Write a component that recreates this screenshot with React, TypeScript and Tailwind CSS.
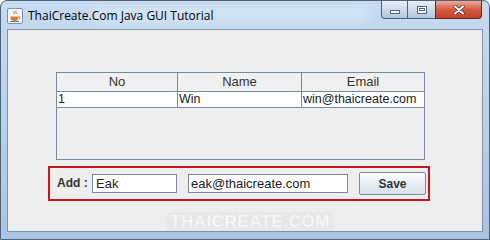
import React from "react";

const JavaIcon = () => (
  <svg width="16" height="16" viewBox="0 0 16 16">
    <rect x="0.5" y="0.5" width="15" height="15" rx="1.5" fill="#f4f7fb" stroke="#7d93ad" />
    <path d="M7 3c-1 1 1 1.5 0 3M9 2.5c-1.2 1.2 1.2 1.8 0 3.5" stroke="#e0642a" strokeWidth="1" fill="none" />
    <path d="M3.5 8.5h8v1.5c0 2-1.8 3-4 3s-4-1-4-3z" fill="#e07b2a" />
    <path d="M11.5 9h1.2c.8 0 .8 1.6-.2 1.8" stroke="#5a7fa8" strokeWidth="0.8" fill="none" />
    <path d="M3 13.5h9" stroke="#5a7fa8" strokeWidth="1" />
  </svg>
);

const rows = [{ no: "1", name: "Win", email: "win@thaicreate.com" }];

export default function App() {
  return (
    <div
      className="w-[490px] h-[240px] flex flex-col overflow-hidden rounded-t-[7px] border border-[#4f6177] bg-gradient-to-b from-[#c6dbf1] via-[#b9d1ea] to-[#a9c4e2] text-[12px] text-[#222]"
      style={{ fontFamily: '"Liberation Sans", Arial, sans-serif' }}
    >
      {/* title bar */}
      <div className="h-[28px] flex items-start shrink-0 relative">
        <div className="absolute left-[90px] right-[120px] top-[5px] h-[16px] rounded-full bg-[#d9e8f7] opacity-70 blur-[4px]" />
        <div className="flex items-center gap-[5px] pl-[6px] pt-[6px] relative">
          <JavaIcon />
          <span
            className="text-[12px] text-black"
            style={{ fontFamily: '"Open Sans", "Liberation Sans", sans-serif' }}
          >
            ThaiCreate.Com Java GUI Tutorial
          </span>
        </div>
        <div className="ml-auto mr-[7px] flex h-[18px] relative">
          <div className="w-[27px] h-[18px] rounded-bl-[4px] border border-t-0 border-[#50627a] bg-gradient-to-b from-[#e6eef7] to-[#b3c6db] flex items-center justify-center">
            <div className="w-[10px] h-[4px] bg-white border border-[#55667c] mt-[4px]" />
          </div>
          <div className="w-[27px] h-[18px] border-b border-[#50627a] bg-gradient-to-b from-[#e6eef7] to-[#b3c6db] flex items-center justify-center">
            <div className="w-[10px] h-[8px] border border-[#55667c] bg-white flex items-center justify-center">
              <div className="w-[6px] h-[3px] border border-[#55667c]" />
            </div>
          </div>
          <div className="w-[47px] h-[18px] rounded-br-[4px] border border-t-0 border-[#5e2b24] bg-gradient-to-b from-[#e9a999] via-[#d45a40] to-[#c5402a] flex items-center justify-center">
            <svg width="12" height="10" viewBox="0 0 12 10">
              <path d="M2 1.5l8 7M10 1.5l-8 7" stroke="#4a1a14" strokeWidth="3.4" strokeLinecap="round" />
              <path d="M2 1.5l8 7M10 1.5l-8 7" stroke="#fff" strokeWidth="2.2" strokeLinecap="round" />
            </svg>
          </div>
        </div>
      </div>

      {/* content */}
      <div className="mx-[6px] mb-[7px] flex-1 border border-[#7f93aa] bg-[#eeeeee] flex flex-col">
        <div className="pl-[48px] pt-[42px]">
          <div className="w-[369px] h-[88px] border border-[#7a8a99] bg-[#eeeeee] flex flex-col">
            <div className="flex h-[19px] border-b border-[#7a8a99] bg-[#f0f0f0] text-[#333] text-[13px]">
              <div className="w-[121px] border-r border-[#7a8a99] flex items-center justify-center">No</div>
              <div className="w-[124px] border-r border-[#7a8a99] flex items-center justify-center">Name</div>
              <div className="flex-1 flex items-center justify-center">Email</div>
            </div>
            {rows.map((r) => (
              <div key={r.no} className="flex h-[16px] bg-white border-b border-[#7a8a99] text-[#222] leading-[15px] text-[12.5px]">
                <div className="w-[121px] border-r border-[#7a8a99] pl-[1px]">{r.no}</div>
                <div className="w-[124px] border-r border-[#7a8a99] pl-[1px]">{r.name}</div>
                <div className="flex-1 pl-[1px]">{r.email}</div>
              </div>
            ))}
          </div>
        </div>

        <div className="pl-[40px] pt-[6px]">
          <div className="w-[382px] h-[35px] border-2 border-[#c8151b] flex items-center">
            <span className="font-bold text-[#333] ml-[7px] w-[35px] -mt-[2px]">Add :</span>
            <div className="w-[85px] h-[19px] border border-[#7a8a99] bg-white pl-[3px] leading-[17px] text-[13px]">Eak</div>
            <div className="ml-[11px] w-[160px] h-[19px] border border-[#7a8a99] bg-white pl-[2px] leading-[17px] text-[13px]">
              eak@thaicreate.com
            </div>
            <button className="ml-[11px] w-[67px] h-[23px] border border-[#7a8a99] rounded-[2px] bg-gradient-to-b from-[#fbfcfe] to-[#d6e0ec] font-bold text-[#333] text-[12px]">
              Save
            </button>
          </div>
        </div>

        <div className="flex justify-center pt-[11px] pl-[10px]">
          <div className="px-[4px] h-[19px] rounded-[4px] bg-[#e8e8e8] flex items-center">
            <span className="text-[17px] tracking-[0.5px] text-[#f6f6f6] font-bold [text-shadow:0_0_1px_#dadada]">
              THAICREATE.COM
            </span>
          </div>
        </div>
      </div>
    </div>
  );
}
